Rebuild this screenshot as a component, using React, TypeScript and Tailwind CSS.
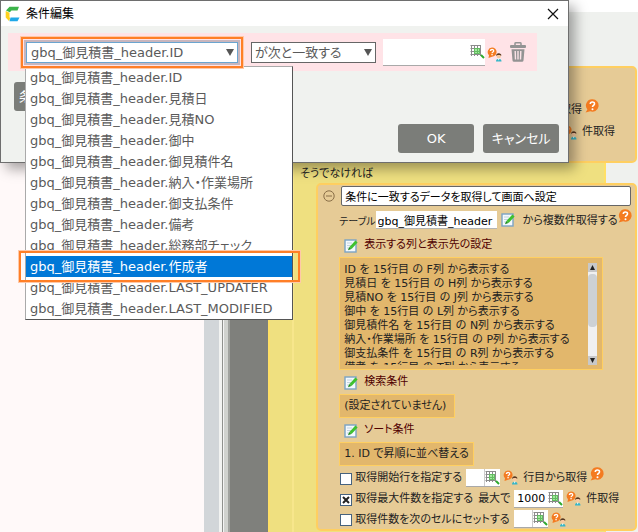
import { useState } from "react"

const fields: string[] = [
    "gbq_御見積書_header.ID",
    "gbq_御見積書_header.見積日",
    "gbq_御見積書_header.見積NO",
    "gbq_御見積書_header.御中",
    "gbq_御見積書_header.御見積件名",
    "gbq_御見積書_header.納入・作業場所",
    "gbq_御見積書_header.御支払条件",
    "gbq_御見積書_header.備考",
    "gbq_御見積書_header.総務部チェック",
    "gbq_御見積書_header.作成者",
    "gbq_御見積書_header.LAST_UPDATER",
    "gbq_御見積書_header.LAST_MODIFIED",
]

const columns: string[] = [
    "ID を 15行目 の F列 から表示する",
    "見積日 を 15行目 の H列 から表示する",
    "見積NO を 15行目 の J列 から表示する",
    "御中 を 15行目 の L列 から表示する",
    "御見積件名 を 15行目 の N列 から表示する",
    "納入・作業場所 を 15行目 の P列 から表示する",
    "御支払条件 を 15行目 の R列 から表示する",
    "備考 を 15行目 の T列 から表示する",
]

function Logo(){
    return(
        <svg className="h-4 w-4 shrink-0" viewBox="0 0 16 16" aria-hidden="true">
            <path d="M4.500 0.800H14L12.500 4.500H6.500L4.800 6.300L1 4.500Z" fill="#3cb44a" />
            <path d="M0.700 5L4.500 6.800V11L5.200 12.500L4 15L0.700 11.500Z" fill="#ffd21f" />
            <path d="M5.500 11.500H14.500L12.500 15.200H4.500Z" fill="#1fa8e8" />
        </svg>
    )
}

function HelpIcon({ className = "" }: { className?: string }){
    return(
        <svg className={`h-[14px] w-[14px] shrink-0 ${className}`} viewBox="0 0 14 14" role="img" aria-label="ヘルプ">
            <path d="M7.500 0.300A6.200 6.200 0 1 1 5.200 12.300L0.600 13.600L2.400 10.500A6.200 6.200 0 0 1 7.500 0.300Z" fill="#f47b20" />
            <path d="M5.300 4.900C5.300 2.400 9.500 2.400 9.500 4.800C9.500 6.400 7.500 6.300 7.500 8" fill="none" stroke="#fff" strokeWidth="1.600" />
            <circle cx="7.500" cy="10.200" r="1" fill="#fff" />
        </svg>
    )
}

function UserHelpIcon(){
    return(
        <svg className="h-[15px] w-[15px] shrink-0" viewBox="0 0 15 15" role="img" aria-label="ユーザーヘルプ">
            <path d="M5 0.500A4.500 4.500 0 1 1 5 9.700L1.500 11L2 8.300A4.600 4.600 0 0 1 5 0.500Z" fill="#f47b20" />
            <path d="M3.400 3.900C3.400 2 6.700 2 6.700 3.900C6.700 5 5.100 4.900 5.100 6.200" fill="none" stroke="#fff" strokeWidth="1.300" />
            <rect x="4.400" y="7" width="1.300" height="1.300" fill="#fff" />
            <circle cx="11.700" cy="9" r="2.200" fill="#f8c9a0" />
            <path d="M9.300 9V7.500Q11.700 5 14.200 7.500V9L13 8H10.500Z" fill="#5a3a22" />
            <path d="M9 14.500Q9 11.800 11.700 11.800Q14.500 11.800 14.500 14.500Z" fill="#35b6c8" />
            <path d="M10.800 11.600H12.600L11.700 13.500Z" fill="#fff" />
        </svg>
    )
}

function CellPickIcon(){
    return(
        <svg className="h-[15px] w-[15px] shrink-0" viewBox="0 0 15 15" aria-hidden="true">
            <rect x="1" y="1" width="10" height="11" fill="#fff" />
            <rect x="4" y="4" width="6" height="6" fill="#a5e8a0" />
            <path d="M0.500 1.500H11M0.500 4.500H11M0.500 7.500H11M0.500 10.500H11M1.500 1V12M4.500 1V12M7.500 1V12M10.500 1V12" stroke="#8b8b8b" />
            <path d="M4.500 4.500H9.500V9.500H4.500ZM7.500 4.500V9.500M4.500 7.500H9.500" fill="none" stroke="#62bd60" />
            <path d="M11 11L14 14" stroke="#2eaa2e" strokeWidth="2" />
        </svg>
    )
}

function EditIcon(){
    return(
        <svg className="h-[14px] w-[14px] shrink-0" viewBox="0 0 14 14" aria-hidden="true">
            <rect x="1" y="1" width="11" height="12" fill="#f4f9fd" stroke="#7ba3c4" strokeWidth="1.400" />
            <path d="M3 4H8M3 6.500H7M3 9H5" stroke="#c3d3df" />
            <path d="M12.500 2.500L6.500 9" stroke="#3fc12f" strokeWidth="3" />
            <path d="M4 11.300L5.200 8L7.400 10Z" fill="#1f8a1c" />
        </svg>
    )
}

function TrashIcon(){
    return(
        <svg className="h-5 w-4" viewBox="0 0 16 20" aria-hidden="true">
            <path d="M5 3.500V1.500Q5 0.800 6 0.800H10Q11 0.800 11 1.500V3.500" fill="none" stroke="#939393" strokeWidth="1.500" />
            <rect x="0" y="3" width="16" height="3" rx="1" fill="#939393" />
            <path d="M1.500 7.200H14.500L13.500 18.500Q13.400 19.800 12 19.800H4Q2.600 19.800 2.500 18.500Z" fill="#939393" />
            <path d="M5.200 9L5.500 17.500M8 9V17.500M10.800 9L10.500 17.500" stroke="#fbe3e7" strokeWidth="1.400" />
        </svg>
    )
}

function CellInput({ label, value = "", wide = false }: { label: string, value?: string, wide?: boolean }){
    return(
        <span className="flex h-[18px] shrink-0 items-center border-b border-[#a9a9a9] bg-white">
            <input aria-label={label} defaultValue={value} className={`h-full text-black outline-none ${wide ? "w-[34px] pl-[3px]" : "w-[19px] border-r border-[#ccc]"}`} />
            <button type="button" aria-label="セルを選択"><CellPickIcon /></button>
        </span>
    )
}

function Heading({ text }: { text: string }){
    return(
        <h3 className="flex h-6 items-center gap-[6px] pt-px pl-[5px] text-[#500000]">
            <button type="button" aria-label={`${text}を編集`}><EditIcon /></button>
            {text}
        </h3>
    )
}

function Check({ id, text, on = false }: { id: string, text: string, on?: boolean }){
    const [checked, setChecked] = useState<boolean>(on)
    return(
        <label htmlFor={id} className="flex items-center gap-[3px] pt-[2px]">
            <span className="grid">
                <input id={id} type="checkbox" checked={checked} onChange={() => setChecked(!checked)} className="col-start-1 row-start-1 h-3 w-3 appearance-none border border-[#46627f] bg-white" />
                {checked && (
                    <svg className="pointer-events-none col-start-1 row-start-1 h-3 w-3" viewBox="0 0 12 12" aria-hidden="true">
                        <path d="M3 3L9 9M9 3L3 9" stroke="#222" strokeWidth="2" />
                    </svg>
                )}
            </span>
            {text}
        </label>
    )
}

function Callout({ className }: { className: string }){
    return <span className={`pointer-events-none absolute z-10 border-2 border-[#ff7f27] ring-1 ring-[#ffc9a8] ${className}`} />
}

function FlowEditor(){
    return(
        <main className="flex min-w-0 flex-1 flex-col bg-[#eff1ee] text-[11px] text-[#222]">
            <div className="h-3 bg-white"></div>
            <div className="mt-[54px] mr-8 flex flex-1 border-r-2 border-l-2 border-[#ffe066] bg-[#efe080] pl-[22px]">
                <div className="min-w-0 flex-1 border-l-2 border-[#f7e68c] pl-[22px]">
                    <section className="-mr-[33px] flex h-[97px] flex-col items-end rounded-[5px] border-2 border-[#ffcf60] bg-[#e6cb96] pt-[31px] pr-5">
                        <div className="flex h-[22px] items-center pr-4">
                            行目から取得<HelpIcon className="mb-2 ml-[3px]" />
                        </div>
                        <div className="flex h-[22px] items-center gap-[5px]">
                            <UserHelpIcon />件取得
                        </div>
                    </section>
                    <h2 className="-ml-4 flex h-5 items-center pt-[2px]">そうでなければ</h2>
                    <section className="-mr-[33px] rounded-[5px] border-2 border-[#ffcf60] bg-[#e6cb96] pr-1 pl-[21px]">
                        <div className="-ml-4 flex items-center gap-[6px] pt-px">
                            <button type="button" aria-label="折りたたむ" className="shrink-0">
                                <svg className="h-3 w-3" viewBox="0 0 12 12" aria-hidden="true">
                                    <circle cx="6" cy="6" r="5.200" fill="none" stroke="#8a6f48" />
                                    <path d="M3 6H9" stroke="#8a6f48" />
                                </svg>
                            </button>
                            <input aria-label="処理名" defaultValue="条件に一致するデータを取得して画面へ設定" className="h-5 min-w-0 flex-1 rounded-[2px] border border-[#666] bg-white px-[3px] text-black" />
                        </div>
                        <div className="flex h-[27px] items-center pt-px">
                            <label htmlFor="table" className="w-[39px] pt-[3px] text-[10px]">テーブル</label>
                            <input id="table" defaultValue="gbq_御見積書_header" className="h-[18px] w-[121px] shrink-0 border-b border-[#b5b5b5] bg-white pl-[2px] text-black" />
                            <button type="button" aria-label="テーブルを編集" className="mx-1"><EditIcon /></button>
                            <span className="ml-1 pt-[3px]">から複数件取得する</span>
                            <HelpIcon className="mb-2 ml-auto" />
                        </div>
                        <Heading text="表示する列と表示先の設定" />
                        <div className="mr-[28px] flex justify-between border border-[#ffcf60] bg-[#e2b76c] pt-[5px] pr-[5px] pb-1 pl-1">
                            <ul className="h-[102px] overflow-hidden leading-[14px]">
                                {columns.map(e => <li key={e}>{e}</li>)}
                            </ul>
                            <div className="flex w-[9px] flex-col bg-[#f0f0f0]">
                                <button type="button" aria-label="上へ" className="flex h-[9px] items-center justify-center bg-[#c8c8c8]">
                                    <svg className="h-[5px] w-[5px]" viewBox="0 0 5 5"><path d="M0 5H5L2.500 0Z" fill="#222" /></svg>
                                </button>
                                <div className="mt-[2px] h-[53px] rounded-[4px] bg-[#cdd1d4]"></div>
                                <button type="button" aria-label="下へ" className="mt-auto flex h-[9px] items-center justify-center bg-[#c8c8c8]">
                                    <svg className="h-[5px] w-[5px]" viewBox="0 0 5 5"><path d="M0 0H5L2.500 5Z" fill="#222" /></svg>
                                </button>
                            </div>
                        </div>
                        <Heading text="検索条件" />
                        <p className="flex h-6 w-fit items-center border border-[#ffcf60] bg-[#e2b76c] pt-px pr-2 pl-1">(設定されていません)</p>
                        <Heading text="ソート条件" />
                        <p className="flex h-6 w-fit items-center border border-[#ffcf60] bg-[#e2b76c] px-1 pt-px">1. ID で昇順に並べ替える</p>
                        <div className="mt-px flex flex-col pl-px">
                            <div className="flex h-[21px] items-center">
                                <Check id="start" text="取得開始行を指定する" />
                                <span className="mr-[3px] ml-1"><CellInput label="取得開始行" /></span>
                                <UserHelpIcon />
                                <span className="ml-[5px] pt-[2px]">行目から取得</span>
                                <HelpIcon className="mb-2 ml-[3px]" />
                            </div>
                            <div className="flex h-[21px] items-center">
                                <Check id="max" text="取得最大件数を指定する" on />
                                <span className="ml-[5px] pt-[2px]">最大で</span>
                                <span className="mr-[3px] ml-1"><CellInput label="最大件数" value="1000" wide /></span>
                                <UserHelpIcon />
                                <span className="ml-[5px] pt-[2px]">件取得</span>
                            </div>
                            <div className="flex h-5 items-center">
                                <Check id="count" text="取得件数を次のセルにセットする" />
                                <span className="mr-[3px] ml-1"><CellInput label="件数のセル" /></span>
                                <UserHelpIcon />
                            </div>
                        </div>
                    </section>
                </div>
            </div>
        </main>
    )
}

function ConditionDialog(){
    const [active, setActive] = useState<string>("gbq_御見積書_header.作成者")

    return(
        <div role="dialog" aria-label="条件編集" className="absolute top-0 left-0 w-[89.2%] border border-[#6e6e6e] bg-[#f0f2ef] text-[13px] text-[#5a5a5a] shadow-[6px_6px_12px_0_rgba(0,0,0,0.35)]">
            <header className="flex h-[25px] items-center gap-[5px] bg-white pr-[9px] pl-1 text-black">
                <Logo />
                <h1 className="text-[12px]">条件編集</h1>
                <button type="button" aria-label="閉じる" className="ml-auto">
                    <svg className="h-3 w-3" viewBox="0 0 12 12" aria-hidden="true">
                        <path d="M1 1L11 11M11 1L1 11" stroke="#111" strokeWidth="1.200" />
                    </svg>
                </button>
            </header>
            <div className="mt-[7px] mr-[31px] ml-[7px] flex h-[38px] items-center bg-[#ffe3e7] pl-[18px]">
                <div className="relative h-[21px] w-[212px]">
                    <select aria-label="項目" className="h-full w-full appearance-none border border-[#6aa5d0] bg-white pl-1 ring-2 ring-[#c9b6bd] outline-none">
                        <option>gbq_御見積書_header.ID</option>
                    </select>
                    <svg className="pointer-events-none absolute top-[7px] right-1 h-[7px] w-[8px]" viewBox="0 0 8 7"><path d="M0 0H8L4 7Z" fill="#555" /></svg>
                    <Callout className="-inset-[5px]" />
                    <ul role="listbox" aria-label="項目一覧" className="absolute top-6 -left-px w-[268px] border border-t-[#aaa] border-r-[#555] border-b-[#555] border-l-[#aaa] bg-white">
                        {fields.map(e => (
                            <li
                                key={e}
                                role="option"
                                aria-selected={e === active}
                                onMouseEnter={() => setActive(e)}
                                className={`relative h-[21px] pl-1 leading-[22px] ${e === active ? "bg-[#0078d7] text-white" : ""}`}
                            >
                                {e}
                                {e === "gbq_御見積書_header.作成者" && <Callout className="-top-[5px] -right-[8px] -bottom-[5px] -left-[7px]" />}
                            </li>
                        ))}
                    </ul>
                </div>
                <div className="relative ml-[13px] h-[21px] w-[125px]">
                    <select aria-label="比較方法" className="h-full w-full appearance-none border border-[#666] bg-white pl-[3px] outline-none">
                        <option>が次と一致する</option>
                    </select>
                    <svg className="pointer-events-none absolute top-[7px] right-1 h-[7px] w-[8px]" viewBox="0 0 8 7"><path d="M0 0H8L4 7Z" fill="#555" /></svg>
                </div>
                <div className="ml-[7px] flex h-[27px] w-[102px] items-center border-b border-[#a9a9a9] bg-white">
                    <input aria-label="値" className="h-full min-w-0 flex-1 outline-none" />
                    <button type="button" aria-label="セルを選択"><CellPickIcon /></button>
                </div>
                <span className="mt-1 ml-[2px]"><UserHelpIcon /></span>
                <button type="button" aria-label="削除" className="ml-2"><TrashIcon /></button>
            </div>
            <button type="button" className="mt-[11px] ml-[13px] block h-[29px] rounded-[3px] bg-[#7b7d79] px-[5px] text-white">条件追加</button>
            <footer className="mt-[13px] mr-[9px] mb-[9px] flex justify-end gap-[9px] text-white">
                <button type="button" className="h-[29px] w-[76px] rounded-[3px] bg-[#7b7d79]">OK</button>
                <button type="button" className="h-[29px] w-[76px] rounded-[3px] bg-[#7b7d79]">キャンセル</button>
            </footer>
        </div>
    )
}

export default function App(){
    return(
        <div className="relative flex min-h-screen overflow-hidden whitespace-nowrap font-['DejaVu_Sans','Noto_Sans_CJK_JP',sans-serif] [font-feature-settings:'palt']">
            <div className="w-[32%] shrink-0 bg-[#fff9f9]"></div>
            <div className="w-[15px] shrink-0 bg-[#d2d6d9]"></div>
            <div className="w-[11px] shrink-0 border-r-2 border-l-[3px] border-r-[#a0a29e] border-l-[#f2f3f1] bg-[#d0d2ce]">
                <div className="h-full w-[2px] border-r border-[#f4f4f4] bg-[#8f918d]"></div>
            </div>
            <div className="w-[38px] shrink-0 bg-[#7f807c]"></div>
            <FlowEditor />
            <ConditionDialog />
        </div>
    )
}
